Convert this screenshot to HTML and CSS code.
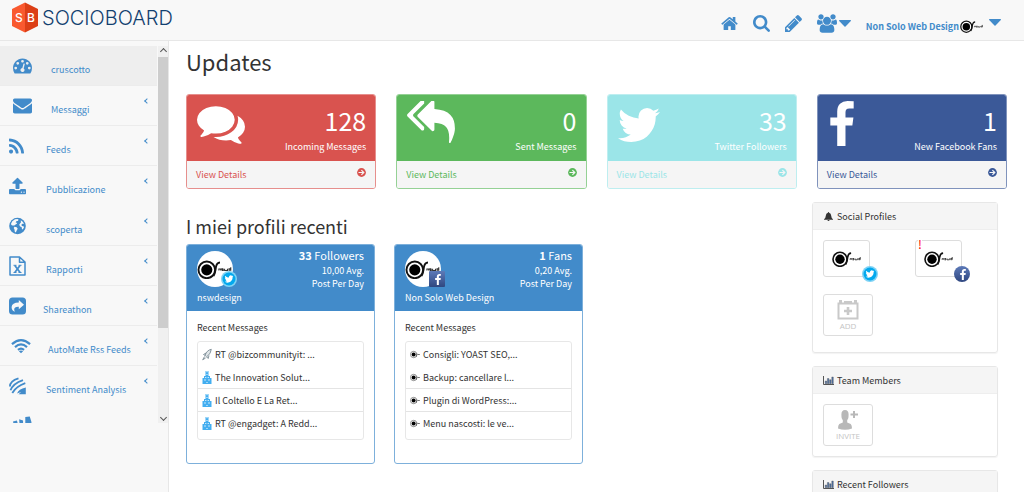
FILE: index.html
```html
<!DOCTYPE html>
<html lang="it">
<head>
<meta charset="utf-8">
<meta name="viewport" content="width=device-width, initial-scale=1">
<title>Socioboard</title>
<link rel="stylesheet" href="styles.css">
</head>
<body>
<svg class="sprite" aria-hidden="true">
  <symbol id="home" viewBox="64 200 1664 1380"><path d="M1472 992v480q0 26-19 45t-45 19h-384v-384h-256v384h-384q-26 0-45-19t-19-45v-480q0-1 .5-3t.5-3l575-474 575 474q1 2 1 6zm223-69l-62 74q-8 9-21 11h-3q-13 0-21-7l-692-577-692 577q-12 8-24 7-13-2-21-11l-62-74q-8-10-7-23.5t11-21.5l719-599q32-26 76-26t76 26l244 204v-195q0-14 9-23t23-9h192q14 0 23 9t9 23v408l219 182q10 8 11 21.5t-7 23.5z"/></symbol>
  <symbol id="search" viewBox="64 128 1664 1664"><path d="M1216 832q0-185-131.500-316.500t-316.500-131.500-316.500 131.500-131.500 316.500 131.500 316.500 316.500 131.500 316.500-131.500 131.500-316.500zm512 832q0 52-38 90t-90 38q-54 0-90-38l-343-342q-179 124-399 124-143 0-273.500-55.500t-225-150-150-225-55.500-273.500 55.500-273.500 150-225 225-150 273.500-55.500 273.500 55.500 225 150 150 225 55.500 273.500q0 220-124 399l343 343q37 37 37 90z"/></symbol>
  <symbol id="pencil" viewBox="128 140 1520 1524"><path d="M491 1536l91-91-235-235-91 91v107h128v128h107zm523-928q0-22-22-22-10 0-17 7l-542 542q-7 7-7 17 0 22 22 22 10 0 17-7l542-542q7-7 7-17zm-54-192l416 416-832 832h-416v-416zm683 96q0 53-37 90l-166 166-416-416 166-165q36-38 90-38 53 0 91 38l235 234q37 39 37 91z"/></symbol>
  <symbol id="users" viewBox="-64 0 1920 1792"><path d="M529 896q-162 5-265 128h-134q-82 0-138-40.500t-56-118.500q0-353 124-353 6 0 43.500 21t97.500 42.500 119 21.500q67 0 133-23-5 37-5 66 0 139 81 256zm1071 637q0 120-73 189.500t-194 69.500h-874q-121 0-194-69.500t-73-189.500q0-53 3.500-103.500t14-109 26.500-108.500 43-97.500 62-81 85.500-53.500 111.500-20q10 0 43 21.500t73 48 107 48 135 21.500 135-21.500 107-48 73-48 43-21.500q61 0 111.500 20t85.500 53.500 62 81 43 97.500 26.500 108.500 14 109 3.500 103.500zm-1024-1277q0 106-75 181t-181 75-181-75-75-181 75-181 181-75 181 75 75 181zm704 384q0 159-112.500 271.500t-271.500 112.500-271.500-112.500-112.500-271.500 112.500-271.500 271.500-112.500 271.500 112.500 112.500 271.500zm576 225q0 78-56 118.500t-138 40.500h-134q-103-123-265-128 81-117 81-256 0-29-5-66 66 23 133 23 59 0 119-21.500t97.500-42.500 43.500-21q124 0 124 353zm-128-609q0 106-75 181t-181 75-181-75-75-181 75-181 181-75 181 75 75 181z"/></symbol>
  <symbol id="caret" viewBox="0 0 12 7"><path d="M.5 0h11q.7.300.3.900L6.500 6.600q-.5.500-1 0L.2.900Q-.2.300.5 0z"/></symbol>
  <symbol id="gauge" viewBox="0 256 1792 1408"><path d="M384 1152q0-53-37.500-90.500t-90.500-37.500-90.500 37.500-37.500 90.500 37.500 90.500 90.500 37.500 90.500-37.500 37.500-90.500zm192-448q0-53-37.500-90.500t-90.500-37.500-90.500 37.500-37.500 90.500 37.500 90.500 90.500 37.500 90.500-37.500 37.500-90.500zm428 481l101-382q6-26-7.500-48.500t-38.500-29.500-48 6.500-30 39.500l-101 382q-60 5-107 43.500t-63 98.500q-20 77 20 146t117 89 146-20 89-117q16-60-6-117t-72-91zm660-33q0-53-37.500-90.500t-90.500-37.500-90.500 37.500-37.500 90.500 37.500 90.500 90.500 37.500 90.500-37.500 37.500-90.500zm-640-640q0-53-37.500-90.500t-90.500-37.500-90.500 37.500-37.500 90.500 37.500 90.500 90.500 37.500 90.500-37.500 37.500-90.500zm448 192q0-53-37.500-90.500t-90.500-37.500-90.500 37.500-37.500 90.500 37.500 90.500 90.500 37.500 90.500-37.500 37.500-90.500zm320 448q0 261-141 483-19 29-54 29h-1402q-35 0-54-29-141-221-141-483 0-182 71-348t191-286 286-191 348-71 348 71 286 191 191 286 71 348z"/></symbol>
  <symbol id="envelope" viewBox="0 256 1792 1408"><path d="M1792 710v794q0 66-47 113t-113 47h-1472q-66 0-113-47t-47-113v-794q44 49 101 87 362 246 497 345 57 42 92.500 65.500t94.500 48 110 24.500h2q51 0 110-24.500t94.500-48 92.500-65.500q170-123 498-345 57-39 100-87zm0-294q0 79-49 151t-122 123q-376 261-468 325-10 7-42.500 31t-54 38-52 32.500-57.500 27-50 9h-2q-23 0-50-9t-57.500-27-52-32.500-54-38-42.500-31q-91-64-262-182.500t-205-142.500q-62-42-117-115.500t-55-136.500q0-78 41.500-130t118.500-52h1472q65 0 112.500 47t47.500 113z"/></symbol>
  <symbol id="rss" viewBox="192 128 1408 1408"><path d="M576 1344q0 80-56 136t-136 56-136-56-56-136 56-136 136-56 136 56 56 136zm512 123q2 28-17 48-18 21-47 21h-135q-25 0-43-16.500t-20-41.500q-22-229-184.500-391.500t-391.500-184.500q-25-2-41.500-20t-16.500-43v-135q0-29 21-47 17-17 43-17h5q160 13 306 80.500t259 181.500q114 113 181.500 259t80.500 306zm512 2q2 27-18 47-18 20-46 20h-143q-26 0-44.500-17.500t-19.500-42.500q-12-215-101-408.500t-231.500-336-336-231.500-408.500-102q-25-1-42.500-19.500t-17.500-43.500v-143q0-28 20-46 18-18 44-18h3q262 13 501.500 120t425.500 294q187 186 294 425.500t120 501.500z"/></symbol>
  <symbol id="upload" viewBox="64 64 1664 1600"><path d="M1344 1472q0-26-19-45t-45-19-45 19-19 45 19 45 45 19 45-19 19-45zm256 0q0-26-19-45t-45-19-45 19-19 45 19 45 45 19 45-19 19-45zm128-224v320q0 40-28 68t-68 28h-1472q-40 0-68-28t-28-68v-320q0-40 28-68t68-28h427q21 56 70.500 92t110.500 36h256q61 0 110.500-36t70.500-92h427q40 0 68 28t28 68zm-325-648q-17 40-59 40h-256v448q0 26-19 45t-45 19h-256q-26 0-45-19t-19-45v-448h-256q-42 0-59-40-17-39 14-69l448-448q18-19 45-19t45 19l448 448q31 30 14 69z"/></symbol>
  <symbol id="globe" viewBox="0 0 17 17"><circle cx="8.500" cy="8.500" r="8.300"/><path fill="#f8f8f8" d="M6 1.800l2.500-.3 1.200.7-1 1.200-1.100.2-1 1.400 1.200.2.300.9-1.500.8-1.300 1L3.600 8 2.400 7.500 2 6.200l1.300-2.400zM11.800 2.700l2.200 1.900.9 1.900-1.500-.3-.9.900.3 1.300 1.700.4.500 1-1.200 2.200-.8-.5-.4-2-1.500-.6-.9-1.700.8-1.300.9-1zM5.500 9.300l2.200.5 1 1.500-1 1.600-.9 2-1-.7-.3-2.200-.8-1.400z"/></symbol>
  <symbol id="excel" viewBox="0 0 17 20"><path fill="none" stroke="currentColor" stroke-width="1.500" stroke-linejoin="round" d="M1 1h9.500L16 6v13H1zM10.500 1v5.200H16"/><path fill="none" stroke="currentColor" stroke-width="1.700" d="M5.800 9.500l5.300 7M11 9.500l-5.200 7"/><path fill="none" stroke="currentColor" d="M4.500 9.300h3M9.500 9.300h3M4.500 16.500h3M9.500 16.500h3"/></symbol>
  <symbol id="share" viewBox="0 0 17 17"><rect width="17" height="17" rx="3.500"/><path fill="#f8f8f8" d="M9.800 2.600l5.200 4.600-5.200 4.600V9.300q-4.500-.3-4.600 2.700 0 1 .7 2.300-3.400-1.600-3.300-4.900Q3 5.300 9.800 5.100z"/></symbol>
  <symbol id="wifi" viewBox="0 0 21 15"><g fill="none" stroke="currentColor" stroke-width="2.300"><path d="M1 5.600q9.500-8.400 19 0M4.200 8.600q6.300-5.400 12.600 0M7.300 11.500q3.200-2.600 6.400 0"/></g><path d="M8.300 12.900q2.200-1.300 4.400 0L10.500 15z"/></symbol>
  <symbol id="sentiment" viewBox="0 0 17 17"><g fill="none" stroke="currentColor" stroke-width="1.800"><path d="M.9 9Q1 3.500 9.500.9M1.500 12.800Q4 6 14 2.600M3.300 15.500Q7 8.800 16.300 5.600"/></g><path d="M16.800 10v6.800H9.500l2.700-2.200-4.200 1.400Q9.500 11.500 16.800 10z"/></symbol>
  <symbol id="bars" viewBox="0 0 17 17"><path d="M0 4.500l3.500-1L5 9H1zM5.500 2.500L9 3.500v5H6zM11 .5l4-.5 1.500 5v4H11z"/></symbol>
  <symbol id="comments" viewBox="0 256 1792 1408"><path d="M1408 768q0 139-94 257t-256.500 186.500-353.500 68.500q-86 0-176-16-124 88-278 128-36 9-86 16h-3q-11 0-20.500-8t-11.500-21q-1-3-1-6.500t.5-6.500 2-6l2.500-5 3.500-5.500 4-5 4.500-5 4-4.500q5-6 23-25t26-29.500 22.500-29 25-38.500 20.500-44q-124-72-195-177t-71-224q0-139 94-257t256.500-186.500 353.500-68.500 353.500 68.500 256.500 186.500 94 257zm384 256q0 120-71 224.500t-195 176.500q10 24 20.500 44t25 38.500 22.500 29 26 29.500 23 25q1 1 4 4.500t4.500 5 4 5 3.500 5.500l2.500 5 2 6 .5 6.500-1 6.500q-3 14-13 22t-22 7q-50-7-86-16-154-40-278-128-90 16-176 16-271 0-472-132 58 4 88 4 161 0 309-45t264-129q125-92 192-212t67-254q0-77-23-152 129 71 204 178t75 230z"/></symbol>
  <symbol id="reply" viewBox="0 108 1792 1610"><path d="M640 1082v70q0 42-39 59-13 5-25 5-27 0-45-19l-512-512q-19-19-19-45t19-45l512-512q29-31 70-14 39 17 39 59v69l-397 398q-19 19-19 45t19 45zm1152 58q0 58-17 133.500t-38.500 138-48 125-40.500 90.500l-20 40q-8 17-28 17-6 0-9-1-25-8-23-34 43-400-106-565-64-71-170.500-110.500t-267.500-52.500v251q0 42-39 59-13 5-25 5-27 0-45-19l-512-512q-19-19-19-45t19-45l512-512q29-31 70-14 39 17 39 59v262q411 28 599 221 169 173 169 509z"/></symbol>
  <symbol id="twitter" viewBox="108 256 1576 1280"><path d="M1684 408q-67 98-162 167 1 14 1 42 0 130-38 259.500t-115.500 248.500-184.500 210.500-258 146-323 54.500q-271 0-496-145 35 4 78 4 225 0 401-138-105-2-188-64.500t-114-159.500q33 5 61 5 43 0 85-11-112-23-185.500-111.500t-73.500-205.500v-4q68 38 146 41-66-44-105-115t-39-154q0-88 44-163 121 149 294.500 238.500t371.500 99.500q-8-38-8-74 0-134 94.500-228.500t228.500-94.500q140 0 236 102 109-21 205-78-37 115-142 178 93-10 186-50z"/></symbol>
  <symbol id="facebook" viewBox="479 0 864 1664"><path d="M1343 12v264h-157q-86 0-116 36t-30 108v189h293l-39 296h-254v759h-306v-759h-255v-296h255v-218q0-186 104-288.500t277-102.500q147 0 228 12z"/></symbol>
  <symbol id="arrow" viewBox="0 0 9 9"><circle cx="4.500" cy="4.500" r="4.400"/><path fill="none" stroke="#f5f5f5" stroke-width="1.200" d="M1.500 4.500h5M4.400 2.100l2.400 2.400-2.400 2.400"/></symbol>
  <symbol id="bell" viewBox="0 0 9 9"><path d="M4.500 0q.6 0 .6.700 2 .5 2.100 3 .1 2.300 1.800 3.500v.500H0v-.5Q1.700 6 1.800 3.700q.1-2.500 2.100-3Q3.900 0 4.500 0zM3.400 8h2.200q-.2 1-1.100 1T3.400 8z"/></symbol>
  <symbol id="chart" viewBox="0 0 11 9"><path fill="none" stroke="#555" d="M.5 0v8.500H11"/><path fill="#4a6fa5" stroke="#555" stroke-width=".4" d="M2.200 5h1.500v2.700H2.200zM4.400 2.500h1.500v5.200H4.400zM6.600 3.800h1.500v3.900H6.600zM8.800 1h1.500v6.700H8.800z"/></symbol>
  <symbol id="brand-mark" viewBox="0 0 29 16"><circle cx="8" cy="8.300" r="7" fill="#fff" stroke="#111" stroke-width="1.600"/><circle cx="8" cy="8.300" r="4.700" fill="#000"/><path fill="none" stroke="#111" stroke-width="1.600" d="M13.600 13.500Q15 11.500 15.700 6q.6-3.600 3.400-3.900"/><path fill="none" stroke="#333" stroke-width=".9" d="M18.200 8.900V7.600h1.500v1.200M22 7.500h-1.300v.7h1.200v.7h-1.300M23 7.400v1.400h2.400V7.400M28.200 6v2.700h-1.500V7.500h1.500"/></symbol>
  <symbol id="tiny-mark" viewBox="0 0 11 9"><circle cx="4" cy="4.500" r="3.500" fill="#fff" stroke="#777" stroke-width=".9"/><circle cx="4" cy="4.500" r="2.200" fill="#000"/><path stroke="#555" fill="none" stroke-width=".9" d="M7 7l.7-3.500M8.300 4.500h2.500"/></symbol>
  <symbol id="rocket" viewBox="0 0 10 12"><path fill="#dfe5e8" stroke="#70828c" stroke-width=".8" d="M9.300.8Q5 1.500 3 6.800l1.600 1.500Q9 5.500 9.300.8zM4 4.500L1.500 6l1.300 1M7 7l-.8 3-1.400-1.500M2.500 8L.7 11.300 3.600 9.500"/></symbol>
  <symbol id="castle" viewBox="0 0 10 13"><path fill="#43aef0" d="M3.500 0h1v1.200h1V0h1v5H8v2h1.500v6h-9V7H2V5h1.500z"/><path fill="none" stroke="#e4f4fe" stroke-width=".8" d="M4.300 3.500h1.400M3 6.500h1.400M5.600 6.500H7M2 9h2M6 9h2M4.300 11.500h1.400"/></symbol>
  <symbol id="calendar-add" viewBox="0 0 22 20"><path fill="none" stroke="#c9c9c9" stroke-width="2" d="M1.500 3.500h19v15h-19z"/><path fill="#c9c9c9" d="M2 0h3v3H2zM7 1h8v2H7zM17 0h3v3h-3zM9.700 7h2.600v2.700H15v2.600h-2.700V15H9.700v-2.700H7V9.700h2.700z"/></symbol>
  <symbol id="person-add" viewBox="0 0 20 20"><path fill="#b8b8b8" d="M7 0q3.600 0 3.600 4.500T9.200 10v2.500l3.500 1.500q1.300 1 1.300 4.500-7 2.500-14 0Q0 15 1.300 14l3.500-1.500V10Q3.400 9 3.400 4.500T7 0zM15 1h2v2.500h3v2h-3V8h-2V5.500h-2.500v-2H15z"/></symbol>
  <linearGradient id="fb-fill" x2="0" y2="1"><stop stop-color="#5d7ab8"/><stop offset="1" stop-color="#2f4780"/></linearGradient>
  <symbol id="tw-badge" viewBox="0 0 16 16"><circle cx="8" cy="8" r="8" fill="#7fd3f5"/><circle cx="8" cy="8" r="6.500" fill="#03a9ee"/><use href="#twitter" x="3.500" y="4" width="9" height="8" fill="#fff"/></symbol>
  <symbol id="fb-badge" viewBox="0 0 16 16"><circle cx="8" cy="8" r="8" fill="url(#fb-fill)"/><use href="#facebook" x="5.500" y="3" width="7" height="11" fill="#fff"/></symbol>
  <symbol id="fb-square" viewBox="0 0 16 16"><rect width="16" height="16" rx="1" fill="url(#fb-fill)"/><use href="#facebook" x="5" y="3" width="8" height="11" fill="#fff"/></symbol>
</svg>

<header class="topbar">
  <a class="logo" href="#">
    <svg class="logo-mark" viewBox="0 0 26 31" aria-hidden="true">
      <path fill="#f9592f" d="M13 .5L0 7v17l13 6.500z"/><path fill="#dc3f16" d="M13 .5L26 7v17l-13 6.500z"/>
      <text y="20" text-anchor="middle" class="logo-initials"><tspan x="7">S</tspan><tspan x="19">B</tspan></text>
    </svg>
    <span class="logo-name">SOCIOBOARD</span>
  </a>
  <nav class="tools" aria-label="Strumenti">
    <a href="#" aria-label="Home"><svg class="tool-icon"><use href="#home"/></svg></a>
    <a href="#" aria-label="Cerca"><svg class="tool-icon"><use href="#search"/></svg></a>
    <a href="#" aria-label="Scrivi"><svg class="tool-icon"><use href="#pencil"/></svg></a>
    <button class="menu-button" type="button" aria-label="Gruppi"><svg class="users-icon"><use href="#users"/></svg><svg class="caret"><use href="#caret"/></svg></button>
    <button class="menu-button account" type="button"><span>Non Solo Web Design</span><svg class="account-mark"><use href="#brand-mark"/></svg><svg class="caret"><use href="#caret"/></svg></button>
  </nav>
</header>

<div class="shell">
  <aside class="sidebar">
    <div class="side-scroll">
      <nav class="side-nav" aria-label="Principale">
        <a class="item inset active" href="#"><svg class="side-icon"><use href="#gauge"/></svg><span class="label">cruscotto</span></a>
        <a class="item inset" href="#"><svg class="side-icon"><use href="#envelope"/></svg><span class="label">Messaggi</span><span class="chevron"></span></a>
        <a class="item" href="#"><svg class="side-icon small"><use href="#rss"/></svg><span class="label">Feeds</span><span class="chevron"></span></a>
        <a class="item plain" href="#"><svg class="side-icon"><use href="#upload"/></svg><span class="label">Pubblicazione</span><span class="chevron"></span></a>
        <a class="item" href="#"><svg class="side-icon"><use href="#globe"/></svg><span class="label">scoperta</span><span class="chevron"></span></a>
        <a class="item" href="#"><svg class="side-icon"><use href="#excel"/></svg><span class="label">Rapporti</span><span class="chevron"></span></a>
        <a class="item tight" href="#"><svg class="side-icon"><use href="#share"/></svg><span class="label">Shareathon</span><span class="chevron"></span></a>
        <a class="item wide" href="#"><svg class="side-icon"><use href="#wifi"/></svg><span class="label">AutoMate Rss Feeds</span><span class="chevron"></span></a>
        <a class="item plain" href="#"><svg class="side-icon"><use href="#sentiment"/></svg><span class="label">Sentiment Analysis</span><span class="chevron"></span></a>
        <a class="item inset" href="#" aria-label="Statistiche"><svg class="side-icon"><use href="#bars"/></svg></a>
      </nav>
      <div class="scrollbar" aria-hidden="true"><span class="scroll-arrow up"></span><span class="thumb"></span><span class="scroll-arrow down"></span></div>
    </div>
  </aside>

  <main class="content">
    <h1 class="title">Updates</h1>
    <section class="stats">
      <article class="stat red">
        <div class="stat-head"><svg class="stat-icon"><use href="#comments"/></svg><div><p class="number">128</p><p>Incoming Messages</p></div></div>
        <a class="stat-foot" href="#"><span>View Details</span><svg class="arrow"><use href="#arrow"/></svg></a>
      </article>
      <article class="stat green">
        <div class="stat-head"><svg class="stat-icon tall"><use href="#reply"/></svg><div><p class="number">0</p><p>Sent Messages</p></div></div>
        <a class="stat-foot" href="#"><span>View Details</span><svg class="arrow"><use href="#arrow"/></svg></a>
      </article>
      <article class="stat aqua">
        <div class="stat-head"><svg class="stat-icon bird"><use href="#twitter"/></svg><div><p class="number">33</p><p>Twitter Followers</p></div></div>
        <a class="stat-foot" href="#"><span>View Details</span><svg class="arrow"><use href="#arrow"/></svg></a>
      </article>
      <article class="stat navy">
        <div class="stat-head"><svg class="stat-icon letter"><use href="#facebook"/></svg><div><p class="number">1</p><p>New Facebook Fans</p></div></div>
        <a class="stat-foot" href="#"><span>View Details</span><svg class="arrow"><use href="#arrow"/></svg></a>
      </article>
    </section>

    <div class="columns">
      <section class="recent">
        <h2 class="subtitle">I miei profili recenti</h2>
        <div class="profiles">
          <article class="profile">
            <div class="profile-head">
              <div class="who"><span class="avatar"><svg class="avatar-mark"><use href="#brand-mark"/></svg><svg class="avatar-badge"><use href="#tw-badge"/></svg></span><span>nswdesign</span></div>
              <div class="figures"><p class="lead"><strong>33</strong> Followers</p><p>10,00 Avg.</p><p>Post Per Day</p></div>
            </div>
            <div class="profile-body">
              <h3 class="list-title">Recent Messages</h3>
              <ul class="messages">
                <li><svg class="msg-icon"><use href="#rocket"/></svg>RT @bizcommunityit: ...</li>
                <li><svg class="msg-icon"><use href="#castle"/></svg>The Innovation Solut...</li>
                <li><svg class="msg-icon"><use href="#castle"/></svg>Il Coltello E La Ret...</li>
                <li><svg class="msg-icon"><use href="#castle"/></svg>RT @engadget: A Redd...</li>
              </ul>
            </div>
          </article>
          <article class="profile">
            <div class="profile-head">
              <div class="who"><span class="avatar"><svg class="avatar-mark"><use href="#brand-mark"/></svg><svg class="avatar-badge"><use href="#fb-square"/></svg></span><span>Non Solo Web Design</span></div>
              <div class="figures"><p class="lead"><strong>1</strong> Fans</p><p>0,20 Avg.</p><p>Post Per Day</p></div>
            </div>
            <div class="profile-body">
              <h3 class="list-title">Recent Messages</h3>
              <ul class="messages">
                <li><svg class="msg-icon"><use href="#tiny-mark"/></svg>Consigli: YOAST SEO,...</li>
                <li><svg class="msg-icon"><use href="#tiny-mark"/></svg>Backup: cancellare l...</li>
                <li><svg class="msg-icon"><use href="#tiny-mark"/></svg>Plugin di WordPress:...</li>
                <li><svg class="msg-icon"><use href="#tiny-mark"/></svg>Menu nascosti: le ve...</li>
              </ul>
            </div>
          </article>
        </div>
      </section>

      <aside class="panels">
        <section class="panel">
          <h3 class="panel-head"><svg class="panel-icon"><use href="#bell"/></svg>Social Profiles</h3>
          <div class="panel-body accounts">
            <a class="thumb-card" href="#" aria-label="nswdesign"><svg class="thumb-mark"><use href="#brand-mark"/></svg><svg class="thumb-badge"><use href="#tw-badge"/></svg></a>
            <a class="thumb-card" href="#" aria-label="Non Solo Web Design"><span class="alert">!</span><svg class="thumb-mark"><use href="#brand-mark"/></svg><svg class="thumb-badge"><use href="#fb-badge"/></svg></a>
            <button class="add-card" type="button"><svg class="add-icon"><use href="#calendar-add"/></svg>ADD</button>
          </div>
        </section>
        <section class="panel">
          <h3 class="panel-head"><svg class="panel-icon"><use href="#chart"/></svg>Team Members</h3>
          <div class="panel-body"><button class="add-card" type="button"><svg class="add-icon"><use href="#person-add"/></svg>INVITE</button></div>
        </section>
        <section class="panel">
          <h3 class="panel-head"><svg class="panel-icon"><use href="#chart"/></svg>Recent Followers</h3>
          <div class="panel-body"></div>
        </section>
      </aside>
    </div>
  </main>
</div>
</body>
</html>
```

FILE: styles.css
```css
* { box-sizing: border-box; }
body {
  margin: 0;
  height: 100vh;
  display: flex;
  flex-direction: column;
  overflow: hidden;
  background: #fff;
  color: #333;
  font: 9px/13px "Noto Sans CJK SC", "Open Sans", sans-serif;
}
h1, h2, h3, p, ul { margin: 0; padding: 0; font-weight: 400; }
ul { list-style: none; }
a { color: inherit; text-decoration: none; }
button { font: inherit; color: inherit; background: none; border: 0; padding: 0; cursor: pointer; }
svg { display: block; flex: none; fill: currentColor; }
.sprite { position: absolute; width: 0; height: 0; }

.topbar {
  flex: none;
  display: flex;
  justify-content: space-between;
  height: 41px;
  padding: 2px 23px 0 12px;
  background: #f8f8f8;
  border-bottom: 1px solid #e7e7e7;
  color: #428bca;
}
.logo { display: flex; align-items: center; gap: 4px; height: 31px; }
.logo-mark { width: 26px; height: 31px; }
.logo-initials { font: 500 12px "Inter", sans-serif; fill: #fff; }
.logo-name { font: 300 20px/30px "Inter", sans-serif; color: #12406f; }
.tools { display: flex; align-items: center; gap: 15px; padding-top: 4px; }
.tool-icon { width: 17px; height: 17px; }
.menu-button { display: flex; align-items: center; gap: 2px; }
.users-icon { width: 20px; height: 19px; }
.caret { width: 12px; height: 7px; }
.account { gap: 1px; font-weight: 700; padding-top: 6px; }
.account-mark { width: 23px; height: 13px; }
.account .caret { margin: 0 0 7px 5px; }

.shell { flex: 1; min-height: 0; display: flex; }
.sidebar {
  flex: none;
  width: 169px;
  padding-top: 5px;
  background: #f8f8f8;
  border-right: 1px solid #e7e7e7;
}
.side-scroll { display: flex; height: calc(100% - 69px); overflow: hidden; }
.side-nav { flex: 1; color: #428bca; }
.item {
  display: grid;
  grid-template-columns: 37px 1fr 10px;
  height: 40px;
  padding: 10px 6px 0 9px;
  border-bottom: 1px solid #ececec;
}
.item.plain { border-color: transparent; }
.item.inset { padding-left: 13px; grid-template-columns: 38px 1fr 10px; }
.item.tight { grid-template-columns: 34px 1fr 10px; }
.item.wide { padding-left: 11px; }
.item.active { background: #eee; }
.side-icon { width: 17px; height: 20px; }
.inset .side-icon { width: 19px; }
.wide .side-icon { width: 20px; }
.side-icon.small { width: 15px; }
.label { padding-top: 7px; white-space: nowrap; }
.chevron {
  width: 4px;
  height: 4px;
  margin: 3px 4px;
  border: solid #428bca;
  border-width: 0 0 1px 1px;
  transform: rotate(45deg);
}
.scrollbar {
  flex: none;
  width: 10px;
  margin-left: 1px;
  display: flex;
  flex-direction: column;
  background: #f0f0f0;
}
.thumb { flex: 1; margin-bottom: 84px; background: #cdcdcd; }
.scroll-arrow { flex: none; height: 11px; display: grid; place-items: center; }
.scroll-arrow::before {
  content: "";
  width: 4px;
  height: 4px;
  border: solid #555;
  border-width: 1px 0 0 1px;
  transform: rotate(45deg);
}
.scroll-arrow.down::before { transform: rotate(225deg); }

.content { flex: 1; min-width: 0; padding: 7px 17px 0; overflow-y: auto; scrollbar-width: none; }
.title { font-size: 22px; line-height: 26px; }
.stats { display: grid; grid-template-columns: repeat(4, 1fr); gap: 20px; margin-top: 20px; }
.stat {
  --c: #d9534f;
  border: 1px solid color-mix(in srgb, var(--c) 65%, white);
  border-radius: 3px;
  overflow: hidden;
}
.stat.green { --c: #5cb85c; }
.stat.aqua { --c: #9be5e8; }
.stat.navy { --c: #3b5998; }
.stat-head {
  display: flex;
  justify-content: space-between;
  height: 66px;
  padding: 6px 9px 0 10px;
  background: var(--c);
  color: #fff;
  text-align: right;
}
.stat-icon { width: 48px; height: 48px; }
.stat-icon.tall { height: 43px; }
.stat-icon.bird { width: 42px; }
.stat-icon.letter { width: 28px; height: 45px; }
.number { font-size: 25px; line-height: 39px; }
.stat-foot {
  display: flex;
  justify-content: space-between;
  padding: 7px 9px;
  background: #f5f5f5;
  color: var(--c);
}
.arrow { width: 9px; height: 9px; }

.columns { display: flex; justify-content: space-between; padding: 13px 9px 0 0; }
.subtitle { font-size: 18px; line-height: 26px; margin-top: 11px; }
.recent { flex: 0 1 397px; }
.profiles { display: grid; grid-template-columns: 1fr 1fr; gap: 19px; margin-top: 5px; }
.profile { border: 1px solid #7db0db; border-radius: 3px; overflow: hidden; }
.profile-head {
  display: flex;
  justify-content: space-between;
  padding: 4px 10px 7px;
  background: #428bca;
  color: #fff;
}
.who { display: flex; flex-direction: column; gap: 4px; padding-top: 2px; white-space: nowrap; }
.avatar {
  position: relative;
  display: grid;
  place-items: center start;
  width: 36px;
  height: 36px;
  border-radius: 50%;
  background: #fff;
}
.avatar-mark { width: 35px; height: 19px; }
.avatar-badge { position: absolute; right: -4px; bottom: 0; width: 16px; height: 16px; }
.figures { text-align: right; white-space: nowrap; }
.lead { font-size: 11px; margin-bottom: 2px; }
.profile-body { padding: 10px 10px 23px; }
.list-title { font-size: 9px; line-height: 13px; margin-bottom: 7px; }
.messages { padding: 1px 0 4px; border: 1px solid #e7e7e7; border-radius: 3px; }
.messages li { display: flex; align-items: center; gap: 3px; height: 23px; padding: 0 4px; white-space: nowrap; }
.messages li:nth-child(2), .messages li:nth-child(3) { border-bottom: 1px solid #e4e4e4; }
.msg-icon { width: 10px; height: 13px; }

.panels { flex: none; width: 186px; display: grid; gap: 13px; }
.panel { border: 1px solid #e7e7e7; border-radius: 3px; box-shadow: 0 1px 1px rgba(0, 0, 0, .05); }
.panel-head {
  display: flex;
  align-items: center;
  gap: 3px;
  padding: 7px 10px 6px;
  background: #f5f5f5;
  border-bottom: 1px solid #eee;
  font-size: 9px;
  line-height: 13px;
}
.panel-icon { width: 11px; height: 9px; }
.panel-body { padding: 10px; }
.accounts { display: grid; grid-template-columns: 92px 1fr; row-gap: 17px; padding-bottom: 16px; }
.thumb-card {
  position: relative;
  display: grid;
  place-items: center;
  width: 47px;
  height: 37px;
  border: 1px solid #ddd;
  border-radius: 3px;
}
.thumb-mark { width: 29px; height: 16px; }
.thumb-badge { position: absolute; right: -9px; bottom: -6px; width: 16px; height: 16px; }
.alert { position: absolute; left: 2px; top: -4px; color: #f00; font-size: 12px; line-height: 13px; background: #fff; }
.add-card {
  display: flex;
  flex-direction: column;
  align-items: center;
  justify-content: center;
  width: 50px;
  height: 42px;
  border: 1px solid #ddd;
  border-radius: 3px;
  color: #c4c4c4;
  font: 8px/11px "Open Sans", sans-serif;
}
.add-icon { width: 22px; height: 20px; }
```
